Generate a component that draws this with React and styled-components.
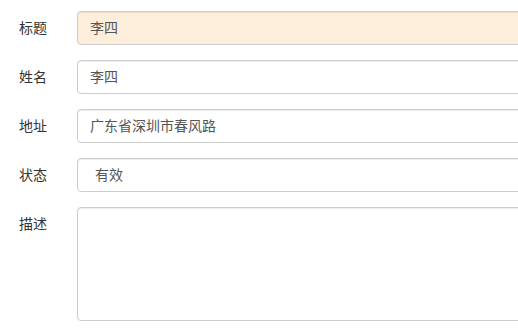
// IMPORTS
import React from 'react'
import styled, { createGlobalStyle } from 'styled-components'

// GLOBAL
const GlobalStyle = createGlobalStyle`
    html, body {
        margin: 0;
        padding: 0;
        background: #fff;
        overflow: hidden;
    }
    body {
        font-family: "Liberation Sans", "Noto Sans CJK SC", sans-serif;
        font-size: 14px;
        color: #333;
    }
`;

// STYLED COMPONENTS
const Form = styled.form`
    display: flex;
    flex-direction: column;
    gap: 15px;
    padding: 11px 0 0 19px;
    width: 560px;
`;
const Row = styled.div`
    display: flex;
    align-items: flex-start;
`;
const Label = styled.label`
    width: 58px;
    flex: none;
    padding-top: 7px;
    line-height: 20px;
    font-size: 14px;
    color: #333;
`;
const Control = styled.div`
    box-sizing: border-box;
    flex: 1;
    height: ${p => p.tall ? '114px' : '34px'};
    padding: ${p => p.select ? '6px 17px' : '6px 12px'};
    line-height: 20px;
    font-size: 14px;
    color: #555;
    background: ${p => p.highlight ? '#fdeedc' : '#fff'};
    border: 1px solid #ccc;
    border-radius: 4px;
    box-shadow: inset 0 1px 1px rgba(0, 0, 0, 0.075);
`;

const FIELDS = [
    { label: '标题', value: '李四', highlight: true },
    { label: '姓名', value: '李四' },
    { label: '地址', value: '广东省深圳市春风路' },
    { label: '状态', value: '有效', select: true },
    { label: '描述', value: '', tall: true },
]

// COMPONENT TO EXPORT
export default function App() {
    return (
        <>
            <GlobalStyle />
            <Form>
                {FIELDS.map(field => (
                    <Row key={field.label}>
                        <Label>{field.label}</Label>
                        <Control highlight={field.highlight} select={field.select} tall={field.tall}>
                            {field.value}
                        </Control>
                    </Row>
                ))}
            </Form>
        </>
    )
}
